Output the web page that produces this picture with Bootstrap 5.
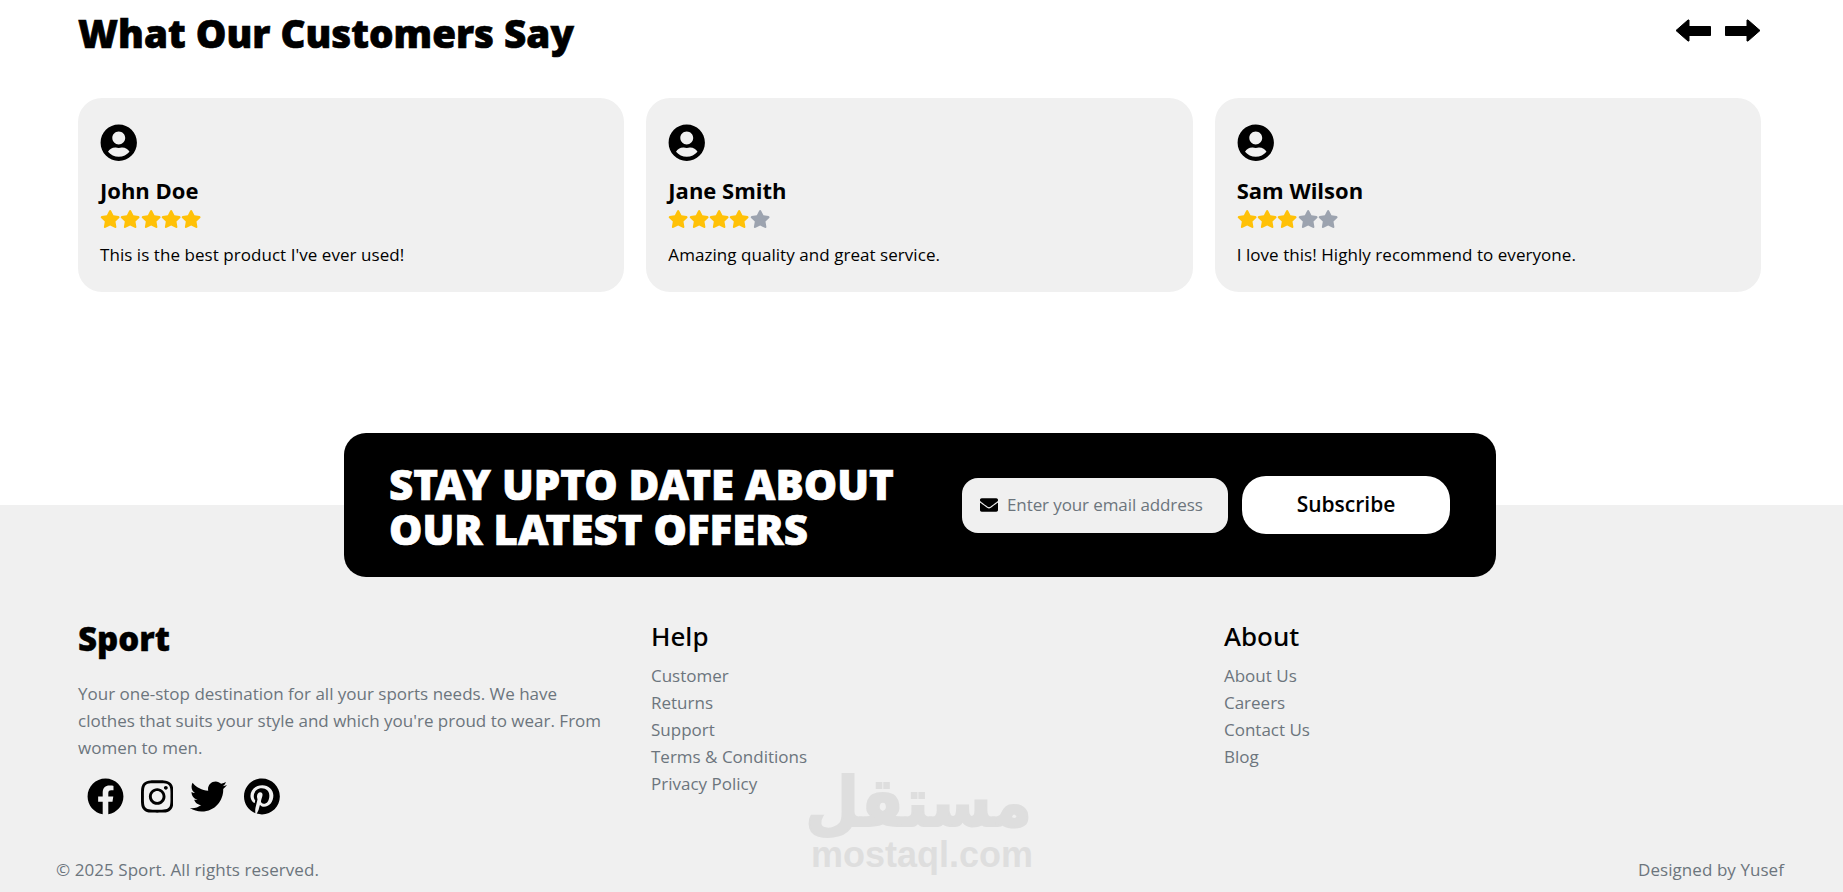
<!DOCTYPE html>
<html lang="en">
<head>
    <meta charset="UTF-8">
    <meta name="viewport" content="width=device-width, initial-scale=1.0">
    <title>Sport</title>
    <link href="https://cdn.jsdelivr.net/npm/bootstrap@5.3.3/dist/css/bootstrap.min.css" rel="stylesheet">
    <style>
        body {
            font-family: "Open Sans", "Noto Sans", sans-serif;
            background-color: #fff;
            color: #000;
            overflow: hidden;
            height: 892px;
        }

        .reviews-wrap {
            padding: 9px 82px 0 78px;
        }

        .reviews-title {
            font-family: "Noto Sans", sans-serif;
            font-size: 38.6px;
            font-weight: 900;
            -webkit-text-stroke: 0.7px #000;
            line-height: 48px;
            margin: 0;
        }

        .arrow-btns {
            gap: 14px;
            margin-top: 10px;
        }

        .arrow-btns svg {
            width: 36px;
            height: 23px;
            display: block;
        }

        .review-row {
            --bs-gutter-x: 22px;
            margin-top: 41px;
        }

        .review-box {
            background-color: #f0f0f0;
            border-radius: 24px;
            padding: 26px 22px 0;
            height: 194px;
        }

        .review-avatar {
            width: 37.5px;
            height: 37.5px;
            display: block;
        }

        .review-name {
            font-size: 22px;
            font-weight: 700;
            line-height: 28px;
            margin: 14px 0 0;
        }

        .star-line {
            height: 20px;
            margin-top: 6px;
        }

        .star-line svg {
            width: 20.3px;
            height: 18px;
            fill: #ffc107;
        }

        .star-line svg.off {
            fill: #9ca3af;
        }

        .review-text {
            font-size: 17px;
            letter-spacing: 0.05px;
            line-height: 24px;
            margin: 13px 0 0;
        }

        .offer-band {
            width: 1152px;
            height: 144px;
            margin: 141px 0 -72px 344px;
            padding: 0 45px;
            background-color: #000;
            border-radius: 22px;
            position: relative;
            z-index: 2;
        }

        .offer-title {
            font-family: "Noto Sans", sans-serif;
            color: #fff;
            font-size: 42px;
            font-weight: 900;
            -webkit-text-stroke: 0.7px #fff;
            line-height: 45px;
            margin: 2px 0 0;
            width: 573px;
            flex: none;
        }

        .mail-field {
            width: 266px;
            height: 55px;
            background-color: #f0f0f0;
            border-radius: 16px;
            padding-left: 18px;
            gap: 9px;
        }

        .mail-field svg {
            width: 18px;
            height: 18px;
            flex: none;
        }

        .mail-field input {
            border: 0;
            outline: 0;
            background: transparent;
            width: 215px;
            padding: 0;
            font-size: 17px;
            letter-spacing: -0.1px;
            color: #333;
        }

        .mail-field input::placeholder {
            color: #6c757d;
        }

        .sub-btn {
            width: 208px;
            height: 58px;
            margin-left: 14px;
            border-radius: 24px;
            background-color: #fff;
            color: #000;
            border: 0;
            font-size: 21px;
            font-weight: 600;
        }

        .site-foot {
            background-color: #f0f0f0;
            height: 400px;
            padding: 113px 59px 0 78px;
            position: relative;
        }

        .foot-row {
            --bs-gutter-x: 36px;
            width: 1719px;
        }

        .foot-brand {
            font-family: "Noto Sans", sans-serif;
            font-size: 33px;
            font-weight: 900;
            -webkit-text-stroke: 0.4px #000;
            line-height: 42px;
            margin: 0 0 20px;
        }

        .foot-desc {
            color: #6c757d;
            font-size: 17px;
            line-height: 27px;
            margin: 0 0 17px;
        }

        .social-line {
            padding-left: 8.5px;
            gap: 17px;
        }

        .social-line svg {
            height: 37px;
            display: block;
        }

        .foot-head {
            font-family: "Noto Sans", sans-serif;
            font-size: 26px;
            font-weight: 500;
            line-height: 34px;
            margin: 1px 0 9px;
        }

        .foot-links a {
            display: block;
            color: #6c757d;
            text-decoration: none;
            font-size: 17px;
            line-height: 27px;
        }

        .foot-bottom {
            color: #6c757d;
            font-size: 17px;
            letter-spacing: 0.06px;
            position: absolute;
            left: 56px;
            right: 59px;
            top: 353px;
            line-height: 24px;
        }

        .wm-mark {
            position: absolute;
            left: 811px;
            top: 268px;
            width: 221px;
            color: #dedede;
            text-align: center;
            pointer-events: none;
        }

        .wm-ar {
            font-family: "DejaVu Sans", sans-serif;
            font-weight: 700;
            font-size: 62px;
            line-height: 60px;
            -webkit-text-stroke: 2px #dedede;
            transform: scaleY(1.1);
        }

        .wm-en {
            font-family: "Liberation Sans", sans-serif;
            font-weight: 700;
            font-size: 36px;
            line-height: 36px;
            margin-top: 4px;
        }
    </style>
</head>
<body>
    <!-- Reviews -->
    <section class="reviews-wrap">
        <div class="d-flex justify-content-between align-items-start">
            <h2 class="reviews-title">What Our Customers Say</h2>
            <div class="arrow-btns d-flex">
                <svg viewBox="0 0 36 23"><path d="M1 11.5 13 1h1v6.500h21.500v9H14V22h-1z" stroke="#000" stroke-linejoin="round"/></svg>
                <svg viewBox="0 0 36 23"><path d="M35 11.5 23 1h-1v6.500H.5v9H22V22h1z" stroke="#000" stroke-linejoin="round"/></svg>
            </div>
        </div>

        <div class="row review-row">
            <div class="col-4">
                <div class="review-box">
                    <svg class="review-avatar" viewBox="0 0 496 512"><path d="M248 8C111 8 0 119 0 256s111 248 248 248 248-111 248-248S385 8 248 8zm0 96c48.600 0 88 39.400 88 88s-39.400 88-88 88-88-39.400-88-88 39.400-88 88-88zm0 344c-58.700 0-111.300-26.600-146.500-68.200 18.800-35.400 55.600-59.800 98.500-59.800 2.400 0 4.800.4 7.100 1.100 13 4.200 26.600 6.900 40.900 6.900 14.300 0 28-2.700 40.900-6.900 2.300-.7 4.700-1.100 7.100-1.100 42.900 0 79.700 24.400 98.500 59.800C359.300 421.400 306.700 448 248 448z"/></svg>
                    <h5 class="review-name">John Doe</h5>
                    <div class="star-line d-flex" data-on="5"></div>
                    <p class="review-text">This is the best product I've ever used!</p>
                </div>
            </div>
            <div class="col-4">
                <div class="review-box">
                    <svg class="review-avatar" viewBox="0 0 496 512"><path d="M248 8C111 8 0 119 0 256s111 248 248 248 248-111 248-248S385 8 248 8zm0 96c48.600 0 88 39.400 88 88s-39.400 88-88 88-88-39.400-88-88 39.400-88 88-88zm0 344c-58.700 0-111.300-26.600-146.500-68.200 18.800-35.400 55.600-59.800 98.500-59.800 2.400 0 4.800.4 7.100 1.100 13 4.200 26.600 6.900 40.900 6.900 14.300 0 28-2.700 40.900-6.900 2.300-.7 4.700-1.100 7.100-1.100 42.900 0 79.700 24.400 98.500 59.800C359.300 421.400 306.700 448 248 448z"/></svg>
                    <h5 class="review-name">Jane Smith</h5>
                    <div class="star-line d-flex" data-on="4"></div>
                    <p class="review-text">Amazing quality and great service.</p>
                </div>
            </div>
            <div class="col-4">
                <div class="review-box">
                    <svg class="review-avatar" viewBox="0 0 496 512"><path d="M248 8C111 8 0 119 0 256s111 248 248 248 248-111 248-248S385 8 248 8zm0 96c48.600 0 88 39.400 88 88s-39.400 88-88 88-88-39.400-88-88 39.400-88 88-88zm0 344c-58.700 0-111.300-26.600-146.500-68.200 18.800-35.400 55.600-59.800 98.500-59.800 2.400 0 4.800.4 7.100 1.100 13 4.200 26.600 6.900 40.900 6.900 14.300 0 28-2.700 40.900-6.900 2.300-.7 4.700-1.100 7.100-1.100 42.900 0 79.700 24.400 98.500 59.800C359.300 421.400 306.700 448 248 448z"/></svg>
                    <h5 class="review-name">Sam Wilson</h5>
                    <div class="star-line d-flex" data-on="3"></div>
                    <p class="review-text">I love this! Highly recommend to everyone.</p>
                </div>
            </div>
        </div>
    </section>

    <!-- Newsletter -->
    <section class="offer-band d-flex align-items-center">
        <h2 class="offer-title">STAY UPTO DATE ABOUT<br>OUR LATEST OFFERS</h2>
        <div class="mail-field d-flex align-items-center">
            <svg viewBox="0 0 512 512"><path d="M502.300 190.800c3.900-3.100 9.700-.2 9.700 4.700V400c0 26.500-21.500 48-48 48H48c-26.500 0-48-21.500-48-48V195.600c0-5 5.700-7.800 9.700-4.700 22.400 17.400 52.100 39.500 154.100 113.600 21.100 15.400 56.700 47.800 92.200 47.600 35.700.3 72-32.800 92.300-47.600 102-74.100 131.600-96.300 154-113.700zM256 320c23.200.4 56.600-29.200 73.400-41.400 132.700-96.300 142.800-104.700 173.400-128.700 5.800-4.500 9.200-11.500 9.200-18.900v-19c0-26.500-21.500-48-48-48H48C21.500 64 0 85.500 0 112v19c0 7.400 3.400 14.300 9.200 18.900 30.600 23.900 40.700 32.400 173.400 128.700 16.800 12.200 50.200 41.800 73.400 41.400z"/></svg>
            <input type="email" placeholder="Enter your email address">
        </div>
        <button class="btn sub-btn" type="button">Subscribe</button>
    </section>

    <!-- Footer -->
    <footer class="site-foot">
        <div class="row foot-row">
            <div class="col-4">
                <h3 class="foot-brand">Sport</h3>
                <p class="foot-desc">Your one-stop destination for all your sports needs. We have clothes that suits your style and which you're proud to wear. From women to men.</p>
                <div class="social-line d-flex">
                    <svg viewBox="0 0 512 512"><path d="M504 256C504 119 393 8 256 8S8 119 8 256c0 123.780 90.690 226.380 209.250 245V327.690h-63V256h63v-54.640c0-62.150 37-96.480 93.670-96.480 27.140 0 55.520 4.840 55.520 4.840v61h-31.280c-30.800 0-40.410 19.120-40.410 38.730V256h68.780l-11 71.690h-57.780V501C413.310 482.380 504 379.780 504 256z"/></svg>
                    <svg viewBox="0 0 448 512"><path d="M224.100 141c-63.600 0-114.900 51.300-114.900 114.900s51.300 114.900 114.900 114.900S339 319.500 339 255.900 287.700 141 224.100 141zm0 189.600c-41.100 0-74.700-33.500-74.700-74.700s33.500-74.700 74.700-74.700 74.700 33.500 74.700 74.700-33.600 74.700-74.700 74.700zm146.400-194.300c0 14.900-12 26.800-26.800 26.800-14.900 0-26.800-12-26.800-26.800s12-26.800 26.800-26.800 26.800 12 26.800 26.800zm76.100 27.200c-1.700-35.900-9.900-67.700-36.200-93.900-26.200-26.200-58-34.400-93.900-36.200-37-2.100-147.900-2.100-184.900 0-35.800 1.700-67.600 9.900-93.900 36.100s-34.400 58-36.200 93.900c-2.100 37-2.100 147.900 0 184.900 1.700 35.900 9.900 67.700 36.200 93.900s58 34.400 93.900 36.200c37 2.100 147.900 2.100 184.900 0 35.900-1.700 67.700-9.900 93.900-36.200 26.200-26.200 34.400-58 36.200-93.900 2.100-37 2.100-147.800 0-184.800zM398.800 388c-7.800 19.600-22.900 34.700-42.600 42.600-29.500 11.700-99.500 9-132.100 9s-102.700 2.600-132.100-9c-19.600-7.800-34.700-22.900-42.600-42.600-11.700-29.500-9-99.500-9-132.100s-2.600-102.700 9-132.100c7.800-19.600 22.900-34.700 42.600-42.600 29.500-11.700 99.500-9 132.100-9s102.700-2.600 132.100 9c19.600 7.800 34.700 22.900 42.600 42.600 11.700 29.500 9 99.500 9 132.100s2.700 102.700-9 132.100z"/></svg>
                    <svg viewBox="0 0 512 512"><path d="M459.370 151.716c.325 4.548.325 9.097.325 13.645 0 138.720-105.583 298.558-298.558 298.558-59.452 0-114.680-17.219-161.137-47.106 8.447.974 16.568 1.299 25.340 1.299 49.055 0 94.213-16.568 130.274-44.832-46.132-.975-84.792-31.188-98.112-72.772 6.498.974 12.995 1.624 19.818 1.624 9.421 0 18.843-1.300 27.614-3.573-48.081-9.747-84.143-51.980-84.143-102.985v-1.299c13.969 7.797 30.214 12.670 47.431 13.319-28.264-18.843-46.781-51.005-46.781-87.391 0-19.492 5.197-37.360 14.294-52.954 51.655 63.675 129.300 105.258 216.365 109.807-1.624-7.797-2.599-15.918-2.599-24.040 0-57.828 46.782-104.934 104.934-104.934 30.213 0 57.502 12.670 76.670 33.137 23.715-4.548 46.456-13.320 66.599-25.340-7.798 24.366-24.366 44.833-46.132 57.827 21.117-2.273 41.584-8.122 60.426-16.243-14.292 20.791-32.161 39.308-52.628 54.253z"/></svg>
                    <svg viewBox="0 0 496 512"><path d="M496 256c0 137-111 248-248 248-25.600 0-50.200-3.900-73.400-11.100 10.100-16.500 25.200-43.500 30.800-65 3-11.600 15.400-59 15.400-59 8.100 15.400 31.700 28.500 56.800 28.500 74.800 0 128.700-68.800 128.700-154.300 0-81.900-66.900-143.200-152.900-143.200-107 0-163.900 71.800-163.900 150.100 0 36.400 19.400 81.700 50.300 96.100 4.700 2.200 7.200 1.200 8.300-3.300.8-3.400 5-20.300 6.900-28.100.6-2.500.3-4.700-1.700-7.100-10.100-12.500-18.300-35.300-18.300-56.600 0-54.700 41.400-107.600 112-107.600 60.900 0 103.600 41.500 103.600 100.900 0 67.100-33.900 113.600-78 113.600-24.300 0-42.600-20.100-36.700-44.800 7-29.500 20.500-61.300 20.500-82.600 0-19-10.200-34.900-31.400-34.900-24.900 0-44.900 25.700-44.900 60.200 0 22 7.400 36.800 7.400 36.800s-24.500 103.800-29 123.200c-5 21.400-3 51.600-.9 71.200C65.400 450.900 0 361.100 0 256 0 119 111 8 248 8s248 111 248 248z"/></svg>
                </div>
            </div>
            <div class="col-4">
                <h4 class="foot-head">Help</h4>
                <div class="foot-links">
                    <a href="#">Customer</a>
                    <a href="#">Returns</a>
                    <a href="#">Support</a>
                    <a href="#">Terms &amp; Conditions</a>
                    <a href="#">Privacy Policy</a>
                </div>
            </div>
            <div class="col-4">
                <h4 class="foot-head">About</h4>
                <div class="foot-links">
                    <a href="#">About Us</a>
                    <a href="#">Careers</a>
                    <a href="#">Contact Us</a>
                    <a href="#">Blog</a>
                </div>
            </div>
        </div>

        <div class="foot-bottom d-flex justify-content-between">
            <span>© 2025 Sport. All rights reserved.</span>
            <span>Designed by Yusef</span>
        </div>

        <div class="wm-mark">
            <div class="wm-ar" dir="rtl">مستقل</div>
            <div class="wm-en">mostaql.com</div>
        </div>
    </footer>

    <script src="https://cdn.jsdelivr.net/npm/bootstrap@5.3.3/dist/js/bootstrap.bundle.min.js"></script>
    <script>
        // stars
        const starPath = "M259.3 17.8L194 150.2 47.9 171.5c-26.2 3.8-36.7 36.1-17.7 54.6l105.7 103-25 145.5c-4.500 26.300 23.200 46 46.400 33.700L288 439.600l130.700 68.700c23.200 12.200 50.900-7.400 46.400-33.700l-25-145.500 105.700-103c19-18.500 8.500-50.800-17.700-54.600L382 150.200 316.700 17.800c-11.700-23.600-45.600-23.900-57.400 0z";
        document.querySelectorAll(".star-line").forEach(line => {
            const on = Number(line.dataset.on);
            let html = "";
            for (let i = 0; i < 5; i++) {
                html += '<svg viewBox="0 0 576 512"' + (i < on ? "" : ' class="off"') + '><path d="' + starPath + '"/></svg>';
            }
            line.innerHTML = html;
        });
    </script>
</body>
</html>
